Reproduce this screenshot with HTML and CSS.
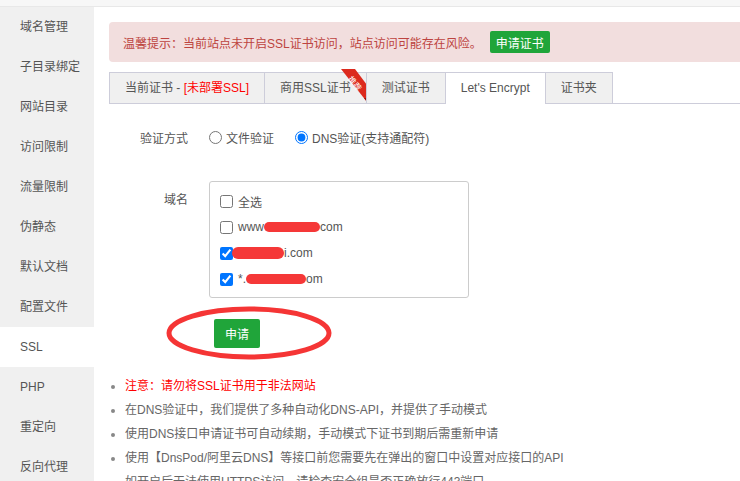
FILE: index.html
```html
<!DOCTYPE html>
<html lang="zh-cn">
<head>
    <meta charset="UTF-8">
    <meta name="viewport" content="width=device-width, initial-scale=1.0">
    <title>SSL</title>
    <link rel="stylesheet" href="styles.css">
</head>
<body>
    <div class="topbar"></div>
    <div class="layout">
        <ul class="sidebar">
            <li>域名管理</li>
            <li>子目录绑定</li>
            <li>网站目录</li>
            <li>访问限制</li>
            <li>流量限制</li>
            <li>伪静态</li>
            <li>默认文档</li>
            <li>配置文件</li>
            <li class="active">SSL</li>
            <li>PHP</li>
            <li>重定向</li>
            <li>反向代理</li>
        </ul>

        <div class="main">
            <div class="alert">
                <span>温馨提示：当前站点未开启SSL证书访问，站点访问可能存在风险。</span>
                <button class="btn btn-small">申请证书</button>
            </div>

            <div class="tabs">
                <div class="tab">当前证书 - <span class="red">[未部署SSL]</span></div>
                <div class="tab tab-hot">商用SSL证书
                    <svg class="ribbon" width="26" height="34" viewBox="0 0 26 34">
                        <polygon points="0,0 14,0 26,16 26,33" fill="#dc2a1e"/>
                        <polygon points="23,29 26,29 26,33" fill="#8e1610"/>
                        <text x="13" y="17" transform="rotate(52 13 15)" font-size="8" fill="#fff" text-anchor="middle">推荐</text>
                    </svg>
                </div>
                <div class="tab">测试证书</div>
                <div class="tab active">Let's Encrypt</div>
                <div class="tab">证书夹</div>
            </div>

            <div class="form">
                <div class="row">
                    <div class="label">验证方式</div>
                    <label class="option"><input type="radio" name="mode"> 文件验证</label>
                    <label class="option"><input type="radio" name="mode" checked> DNS验证(支持通配符)</label>
                </div>

                <div class="row row-domain">
                    <div class="label">域名</div>
                    <div class="domain-box">
                        <label class="check"><input type="checkbox">全选</label>
                        <label class="check"><input type="checkbox">www<span class="scribble w56"></span>com</label>
                        <label class="check"><input type="checkbox" checked><span class="scribble w52 over"></span>i.com</label>
                        <label class="check"><input type="checkbox" checked>*.<span class="scribble w60"></span>om</label>
                    </div>
                </div>

                <div class="apply-row">
                    <button class="btn btn-apply">申请</button>
                    <svg class="circle" width="170" height="58" viewBox="0 0 170 58">
                        <ellipse cx="84" cy="28" rx="80" ry="24" fill="none" stroke="#f53535" stroke-width="5"/>
                    </svg>
                </div>
            </div>

            <ul class="notes">
                <li class="red">注意：请勿将SSL证书用于非法网站</li>
                <li>在DNS验证中，我们提供了多种自动化DNS-API，并提供了手动模式</li>
                <li>使用DNS接口申请证书可自动续期，手动模式下证书到期后需重新申请</li>
                <li>使用【DnsPod/阿里云DNS】等接口前您需要先在弹出的窗口中设置对应接口的API</li>
                <li>如开启后无法使用HTTPS访问，请检查安全组是否正确放行443端口</li>
            </ul>
        </div>
    </div>
</body>
</html>
```

FILE: styles.css
```css
body {
    margin: 0;
    font-family: "Liberation Sans", "Noto Sans CJK SC", sans-serif;
    font-size: 12px;
    color: #555;
    background-color: #fff;
    overflow: hidden;
}

ul {
    margin: 0;
    padding: 0;
    list-style: none;
}

.topbar {
    height: 6px;
    background-color: #f7f7f7;
    border-bottom: 1px solid #e8e8e8;
}

.layout {
    display: flex;
}

.sidebar {
    width: 94px;
    flex-shrink: 0;
    background-color: #f0f0f0;
}

.sidebar li {
    height: 40px;
    line-height: 40px;
    padding-left: 20px;
}

.sidebar li.active {
    background-color: #fff;
}

.main {
    flex: 1;
    min-width: 0;
    padding: 15px 0 0 15px;
}

.red {
    color: #f00;
}

.alert {
    display: flex;
    align-items: center;
    width: 680px;
    height: 40px;
    padding: 0 14px;
    background-color: #f2dede;
    color: #bd4440;
    border-radius: 4px;
}

.btn {
    border: none;
    border-radius: 2px;
    background-color: #20a53a;
    color: #fff;
    font-family: inherit;
    cursor: pointer;
    padding: 0;
}

.btn-small {
    width: 60px;
    height: 22px;
    margin-left: 8px;
    font-size: 12px;
}

.tabs {
    display: flex;
    align-items: flex-start;
    margin-top: 10px;
    width: 700px;
    border-bottom: 1px solid #cdcdda;
}

.tab {
    position: relative;
    height: 30px;
    line-height: 30px;
    padding: 0 15px;
    border: 1px solid #cdcdda;
    border-bottom: none;
    margin-right: -1px;
    background-color: #f0f0f0;
    white-space: nowrap;
}

.tab.active {
    height: 31px;
    margin-bottom: -1px;
    background-color: #fff;
}

.ribbon {
    position: absolute;
    top: -4px;
    right: -1px;
}

.form {
    padding-top: 18px;
}

.row {
    display: flex;
    align-items: center;
    height: 30px;
}

.label {
    width: 79px;
    margin-right: 21px;
    text-align: right;
}

.option {
    display: flex;
    align-items: center;
    margin-right: 21px;
}

.option input {
    margin: 0 4px 0 0;
}

.row-domain {
    align-items: flex-start;
    height: auto;
    margin-top: 29px;
}

.row-domain .label {
    padding-top: 9px;
}

.domain-box {
    width: 260px;
    padding: 6px 10px 5px;
    border: 1px solid #ccc;
    border-radius: 3px;
    box-sizing: border-box;
}

.check {
    display: flex;
    align-items: center;
    height: 26px;
}

.check input {
    margin: 0 5px 0 0;
}

.scribble {
    display: inline-block;
    height: 10px;
    background-color: #f53838;
    border-radius: 6px;
}

.scribble.w56 {
    width: 56px;
}

.scribble.w52 {
    width: 52px;
    height: 12px;
    margin-left: -6px;
}

.scribble.w60 {
    width: 60px;
}

.apply-row {
    position: relative;
    height: 29px;
    margin-top: 21px;
}

.btn-apply {
    width: 46px;
    height: 29px;
    margin-left: 105px;
    font-size: 12px;
}

.circle {
    position: absolute;
    left: 56px;
    top: -14px;
}

.notes {
    margin-top: 26px;
    padding-left: 2px;
    color: #666;
}

.notes li {
    height: 24px;
    line-height: 24px;
    white-space: nowrap;
}

.notes li::before {
    content: "";
    display: inline-block;
    width: 4px;
    height: 4px;
    margin-right: 10px;
    vertical-align: middle;
    border-radius: 50%;
    background-color: #888;
}

.notes li.red {
    color: #f00;
}
```
